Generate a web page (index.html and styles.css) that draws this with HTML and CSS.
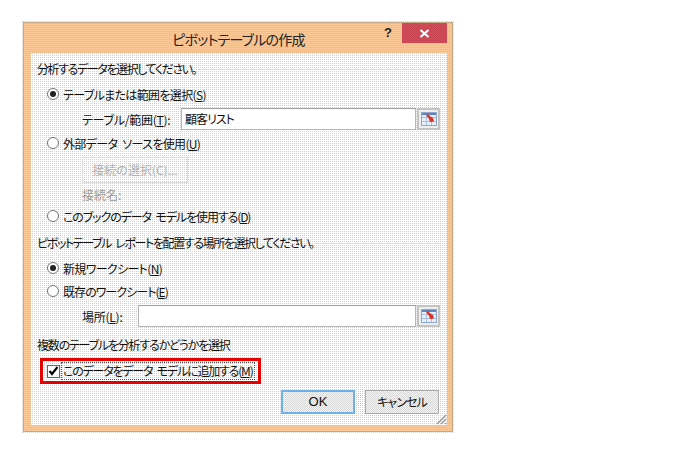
FILE: index.html
```html
<!DOCTYPE html>
<html lang="ja">
<head>
<meta charset="utf-8">
<title>ピボットテーブルの作成</title>
<link rel="stylesheet" href="styles.css">
</head>
<body>
<div class="dialog">
  <header class="titlebar">
    <span class="title">ピボットテーブルの作成</span>
    <span class="help">?</span>
    <span class="close"><svg width="11" height="9" viewBox="0 0 11 9"><path d="M1.5 1 9.5 8M9.5 1 1.5 8" stroke="#fff" stroke-width="2" fill="none"/></svg></span>
  </header>
  <main class="client">
    <div class="heading h1"><span class="ls-a">分析するデータを選択してください。</span></div>
    <div class="radio-row r1"><span class="radio on"></span><span class="ls-c">テーブルまたは範囲を選択(<u>S</u>)</span></div>
    <div class="field f1">
      <span class="label l1">テーブル/範囲(<u>T</u>):</span>
      <span class="input">顧客リスト</span>
      <span class="picker"><svg width="16" height="14" viewBox="0 0 16 14"><rect x="0.5" y="0.5" width="15" height="13" fill="#e6eef8" stroke="#8fa8cc"/><path d="M1 5.5h14M1 9.5h14M5.5 4v9M10.5 4v9" stroke="#a9c0e0"/><path d="M1 1h14v2H1z" fill="#5f86bd"/><path d="M5 3l2-1 3 3 2 1 1 3-2 1-2 0-1-3z" fill="#d8352a"/></svg></span>
    </div>
    <div class="radio-row r2"><span class="radio"></span><span class="ls-c spaced">外部データ ソースを使用(<u>U</u>)</span></div>
    <div class="conn-btn">接続の選択(C)...</div>
    <div class="conn-name">接続名:</div>
    <div class="radio-row"><span class="radio"></span><span class="ls-b spaced">このブックのデータ モデルを使用する(<u>D</u>)</span></div>
    <div class="heading h2"><span class="ls-a spaced">ピボットテーブル レポートを配置する場所を選択してください。</span></div>
    <div class="radio-row short r3"><span class="radio on"></span><span class="ls-c">新規ワークシート(<u>N</u>)</span></div>
    <div class="radio-row short r4"><span class="radio"></span><span class="ls-d">既存のワークシート(<u>E</u>)</span></div>
    <div class="field f2">
      <span class="label l2">場所(<u>L</u>):</span>
      <span class="input"></span>
      <span class="picker"><svg width="16" height="14" viewBox="0 0 16 14"><rect x="0.5" y="0.5" width="15" height="13" fill="#e6eef8" stroke="#8fa8cc"/><path d="M1 5.5h14M1 9.5h14M5.5 4v9M10.5 4v9" stroke="#a9c0e0"/><path d="M1 1h14v2H1z" fill="#5f86bd"/><path d="M5 3l2-1 3 3 2 1 1 3-2 1-2 0-1-3z" fill="#d8352a"/></svg></span>
    </div>
    <div class="heading h3"><span class="ls-e">複数のテーブルを分析するかどうかを選択</span></div>
    <div class="highlight">
      <span class="check"><svg width="11" height="10" viewBox="0 0 11 10"><path d="M1.5 5 4 8 9.5 1" stroke="#000" stroke-width="2.2" fill="none"/></svg></span>
      <span class="focus ls-f spaced">このデータをデータ モデルに追加する(<u>M</u>)</span>
    </div>
    <footer class="buttons">
      <span class="btn default">OK</span>
      <span class="btn cancel">キャンセル</span>
    </footer>
    <svg class="grip" width="11" height="11" viewBox="0 0 11 11"><path d="M1 10 10 1M5 10l5-5M9 10l1-1" stroke="#9a9a9a" stroke-width="1.4"/></svg>
  </main>
</div>
</body>
</html>
```
FILE: styles.css
```css
* { box-sizing: border-box; }
html, body { margin: 0; height: 100%; background: #fff; }
body {
  padding: 22px 0 0 23px;
  font-family: "Noto Sans CJK JP", "Liberation Sans", sans-serif;
  font-size: 12px;
  color: #111;
  font-feature-settings: "palt";
}
.ls-a { letter-spacing: -1.4px; }
.ls-b { letter-spacing: -1.1px; }
.ls-c { letter-spacing: -0.65px; }
.ls-d { letter-spacing: -0.95px; }
.ls-e { letter-spacing: -1.2px; }
.ls-f { letter-spacing: -1.2px; }
.spaced { word-spacing: 3px; }
.dialog {
  width: 430px;
  height: 410px;
  padding: 0 5px 6px 7px;
  display: flex;
  flex-direction: column;
  background: repeating-conic-gradient(#f6bd8c 0 25%, #eccc82 0 50%, #ffcc99 0 75%, #eccc82 0) 0 0 / 2px 2px;
  border: 1px solid #c2a987;
  outline: 1px dotted #d8d8d8;
}
.titlebar {
  height: 30px;
  flex: none;
  display: flex;
  position: relative;
  justify-content: center;
}
.title { font-size: 14px; letter-spacing: -0.75px; color: #222; line-height: 30px; margin-top: 1px; margin-right: 1px; }
.help { position: absolute; left: 353px; top: 0; font: bold 13px/20px "Liberation Sans", sans-serif; color: #222; }
.close {
  position: absolute;
  right: 0;
  top: 0;
  width: 45px;
  height: 20px;
  display: flex;
  align-items: center;
  justify-content: center;
  background: repeating-conic-gradient(#c7434f 0 25%, #d65050 0 50%) 0 0 / 2px 2px;
}
.client {
  flex: 1;
  position: relative;
  padding: 8px 7px 0 6px;
  display: flex;
  flex-direction: column;
  background: conic-gradient(#d0d0d0 0 25%, #fff 0) 0 0 / 2px 2px;
}
.heading { height: 16px; line-height: 16px; white-space: nowrap; display: flex; align-items: center; gap: 3px; }
.heading::after { content: ""; flex: 1; height: 1px; background: #dcdcdc; }
.h2 { margin-top: 7px; }
.h3 { margin-top: 10px; }
.h3::after { display: none; }
.radio-row { height: 24px; display: flex; align-items: center; gap: 4px; padding-left: 10px; white-space: nowrap; flex: none; }
.r1 { margin-top: 5px; }
.r2 { margin-top: 1px; }
.short { height: 22px; }
.r3 { margin-top: 6px; }
.r4 { margin-top: 1px; }
.radio {
  width: 12px;
  height: 12px;
  flex: none;
  border-radius: 50%;
  border: 1px solid #777;
  background: #fff;
  display: flex;
  align-items: center;
  justify-content: center;
}
.radio.on::before { content: ""; width: 6px; height: 6px; border-radius: 50%; background: #222; }
.field { height: 22px; flex: none; display: flex; align-items: center; padding-left: 45px; }
.f1 { margin-top: 2px; }
.f2 { margin-top: 3px; }
.label { letter-spacing: -0.25px; }
.l1 { width: 99px; }
.l2 { width: 56px; }
.input {
  flex: none;
  height: 22px;
  line-height: 20px;
  padding-left: 3px;
  letter-spacing: -1px;
  background: #fff;
  border: 1px solid #b5b5b5;
  border-top-color: #9f9f9f;
}
.f1 .input { width: 235px; }
.f2 .input { width: 278px; }
.picker {
  width: 23px;
  height: 22px;
  margin-left: 1px;
  flex: none;
  display: flex;
  align-items: center;
  justify-content: center;
  border: 2px solid #c4c4c4;
  background: #eee;
}
.conn-btn {
  margin: 2px 0 0 45px;
  width: 106px;
  height: 26px;
  flex: none;
  line-height: 24px;
  text-align: center;
  color: #b0b0b0;
  border: 1px solid #dcdcdc;
}
.conn-name { margin: 3px 0 0 45px; height: 18px; line-height: 18px; color: #9a9a9a; flex: none; }
.highlight {
  margin: 5px 0 0 3px;
  width: 221px;
  height: 26px;
  flex: none;
  display: flex;
  align-items: center;
  gap: 2px;
  padding-left: 4px;
  border: 3px solid #e60000;
}
.check {
  width: 13px;
  height: 13px;
  flex: none;
  display: flex;
  align-items: center;
  justify-content: center;
  border: 1px solid #666;
  background: #fff;
}
.focus { line-height: 16px; outline: 1px dotted #555; white-space: nowrap; padding: 0 1px; }
.buttons { margin: 6px 0 0 0; display: flex; justify-content: flex-end; gap: 10px; padding-right: 1px; flex: none; }
.btn {
  width: 74px;
  height: 24px;
  line-height: 22px;
  text-align: center;
  border: 1px solid #aaa;
  background: repeating-conic-gradient(#d8d8d8 0 25%, #f4f4f4 0 50%) 0 0 / 2px 2px;
}
.cancel { letter-spacing: -0.9px; }
.btn.default { border: 2px solid #6cb0ec; line-height: 20px; font-family: "Liberation Sans", sans-serif; font-size: 13px; }
.grip { position: absolute; right: 0; bottom: 0; }
```
